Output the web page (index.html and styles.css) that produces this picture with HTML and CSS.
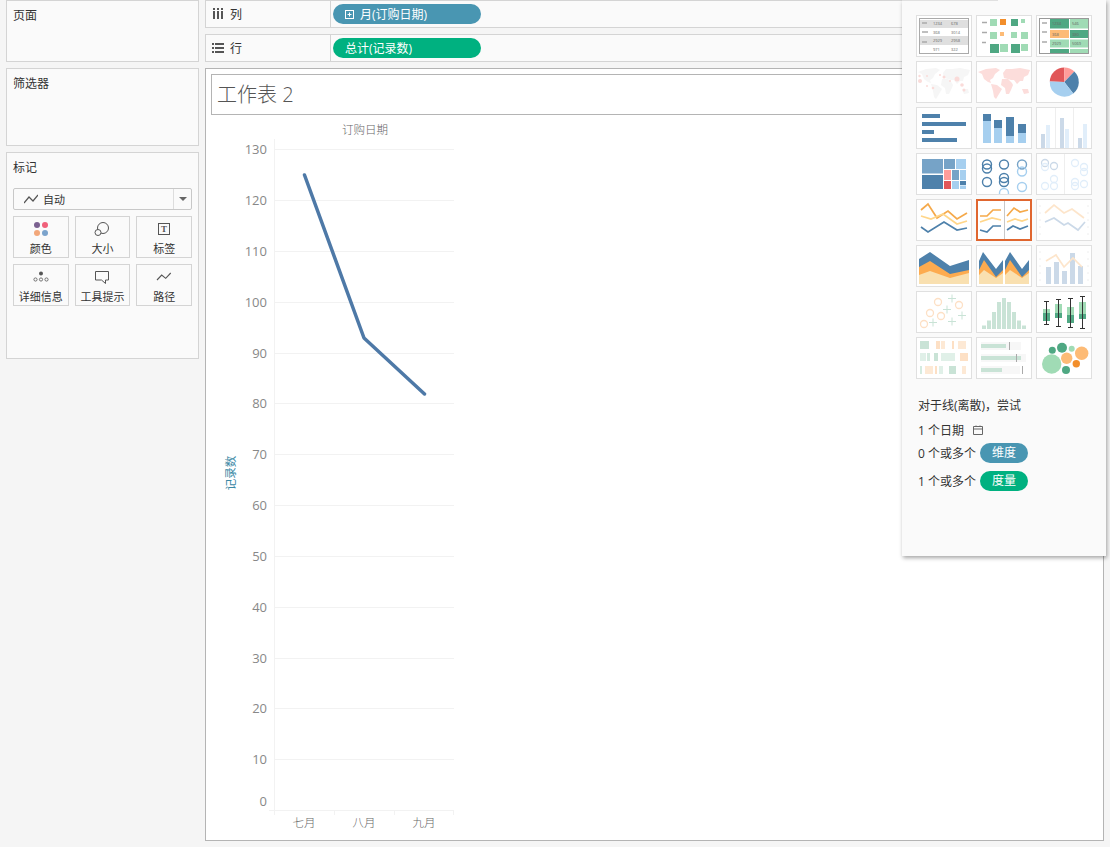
FILE: index.html
```html
<!DOCTYPE html>
<html>
<head>
    <title>工作表 2</title>
    <link rel="stylesheet" href="styles.css">
</head>
<body>
    <div class="app">
        <div class="side">
            <div class="panel panel-pages"><div class="panel-title">页面</div></div>
            <div class="panel panel-filters"><div class="panel-title">筛选器</div></div>
            <div class="panel panel-marks">
                <div class="panel-title">标记</div>
                <div class="mark-select">
                    <svg class="mark-select-icon" width="14" height="10" viewBox="0 0 14 10"><polyline points="0,9 5,3 9,7 14,1" fill="none" stroke="#555" stroke-width="1.2"/></svg>
                    <span class="mark-select-text">自动</span>
                    <span class="mark-select-arrow"></span>
                </div>
                <div class="mark-cards">
                    <div class="mark-card">
                        <svg width="24" height="20" viewBox="0 0 24 20"><circle cx="8" cy="5" r="3" fill="#7b6190"/><circle cx="16" cy="5" r="3" fill="#f0607a"/><circle cx="8" cy="13" r="3" fill="#f2a77a"/><circle cx="16" cy="13" r="3" fill="#7ba3cc"/></svg>
                        <span>颜色</span>
                    </div>
                    <div class="mark-card">
                        <svg width="24" height="20" viewBox="0 0 24 20"><circle cx="13" cy="8" r="5.5" fill="none" stroke="#555"/><circle cx="8" cy="12.5" r="3" fill="#fafafa" stroke="#555"/></svg>
                        <span>大小</span>
                    </div>
                    <div class="mark-card">
                        <svg width="24" height="20" viewBox="0 0 24 20"><rect x="6.5" y="3.5" width="11" height="11" fill="none" stroke="#555"/><text x="12" y="12" text-anchor="middle" class="icon-t">T</text></svg>
                        <span>标签</span>
                    </div>
                    <div class="mark-card">
                        <svg width="24" height="20" viewBox="0 0 24 20"><circle cx="12" cy="5.5" r="2" fill="#555"/><circle cx="6.5" cy="11.5" r="1.6" fill="none" stroke="#555" stroke-width=".8"/><circle cx="12" cy="11.5" r="1.6" fill="none" stroke="#555" stroke-width=".8"/><circle cx="17.5" cy="11.5" r="1.6" fill="none" stroke="#555" stroke-width=".8"/></svg>
                        <span>详细信息</span>
                    </div>
                    <div class="mark-card">
                        <svg width="24" height="20" viewBox="0 0 24 20"><path d="M5.5 3.5H18.5V12H15.5V15.5L11.5 12H5.5Z" fill="none" stroke="#555"/></svg>
                        <span>工具提示</span>
                    </div>
                    <div class="mark-card">
                        <svg width="24" height="20" viewBox="0 0 24 20"><polyline points="5,12 9.7,7 13.7,10.3 18.7,5" fill="none" stroke="#555" stroke-width="1.1"/></svg>
                        <span>路径</span>
                    </div>
                </div>
            </div>
        </div>

        <div class="main">
            <div class="shelf">
                <div class="shelf-label">
                    <svg width="12" height="12" viewBox="0 0 12 12"><path d="M1 0h2v2H1zM5 0h2v2H5zM9 0h2v2H9zM1 3h2v8H1zM5 3h2v8H5zM9 3h2v8H9z" fill="#555"/></svg>
                    <span>列</span>
                </div>
                <div class="pill pill-dim">
                    <svg width="9" height="9" viewBox="0 0 9 9"><rect x=".5" y=".5" width="8" height="8" fill="none" stroke="#fff"/><path d="M2.5 4.5h4M4.5 2.5v4" stroke="#fff"/></svg>
                    <span>月(订购日期)</span>
                </div>
            </div>
            <div class="shelf">
                <div class="shelf-label">
                    <svg width="12" height="12" viewBox="0 0 12 12"><path d="M0 1h2v2H0zM3 1h9v2H3zM0 5h2v2H0zM3 5h9v2H3zM0 9h2v2H0zM3 9h9v2H3z" fill="#555"/></svg>
                    <span>行</span>
                </div>
                <div class="pill pill-measure"><span>总计(记录数)</span></div>
            </div>

            <div class="view">
                <div class="view-title">工作表 2</div>
                <svg class="chart" width="400" height="725" viewBox="206 115 400 725">
                    <text x="365" y="134" text-anchor="middle" class="chart-cat">订购日期</text>
                    <g stroke="#f2f2f2" fill="none">
                        <path d="M274 149.500H454M274 200.500H454M274 251.500H454M274 302.500H454M274 353.500H454M274 403.500H454M274 454.500H454M274 505.500H454M274 556.500H454M274 607.500H454M274 658.500H454M274 708.500H454M274 759.500H454"/>
                        <path d="M274.500 139V815M269 810.500H454M334.500 810V815M394.500 810V815M453.500 810V815"/>
                    </g>
                    <g class="chart-num" text-anchor="end">
                        <text x="267" y="154">130</text><text x="267" y="205">120</text><text x="267" y="256">110</text>
                        <text x="267" y="307">100</text><text x="267" y="358">90</text><text x="267" y="408">80</text>
                        <text x="267" y="459">70</text><text x="267" y="510">60</text><text x="267" y="561">50</text>
                        <text x="267" y="612">40</text><text x="267" y="663">30</text><text x="267" y="713">20</text>
                        <text x="267" y="764">10</text><text x="267" y="806">0</text>
                    </g>
                    <polyline points="304.500,175 364,338 424.500,394" fill="none" stroke="#4e79a7" stroke-width="3.500" stroke-linejoin="round" stroke-linecap="round"/>
                    <g class="chart-cat" text-anchor="middle">
                        <text x="304" y="827">七月</text><text x="364" y="827">八月</text><text x="424" y="827">九月</text>
                    </g>
                    <text class="chart-axis" transform="translate(235 473) rotate(-90)" text-anchor="middle">记录数</text>
                </svg>
            </div>
        </div>
    </div>

    <div class="show-me">
        <div class="thumbs">
            <svg class="thumb" viewBox="1 1 54 40">
                <rect x="3.500" y="3.500" width="49" height="35" fill="#fff" stroke="#aaa"/><rect x="4" y="5" width="48" height="8" fill="#dfdfdf"/><rect x="4" y="21" width="48" height="9" fill="#dfdfdf"/>
                <path d="M6 8h5M6 17h6M6 27h5" stroke="#aaa" stroke-width="1.500"/>
                <g class="thumb-num"><text x="17" y="10">1234</text><text x="35" y="10">678</text><text x="17" y="19">368</text><text x="35" y="19">3014</text><text x="17" y="27">2929</text><text x="35" y="27">2958</text><text x="17" y="36">971</text><text x="35" y="36">322</text></g>
            </svg>
            <svg class="thumb" viewBox="1 1 54 40">
                <path d="M6 7.500h5M6 17.500h5M6 27.500h4" stroke="#aaa" stroke-width="1.500"/>
                <g fill="#a0dbb5"><rect x="14" y="4" width="7" height="7"/><rect x="45" y="4" width="4" height="4"/><rect x="14" y="17" width="7" height="7"/><rect x="35" y="17" width="6" height="6"/><rect x="45" y="17" width="7" height="7"/><rect x="24" y="29" width="8" height="8"/><rect x="45" y="29" width="7" height="7"/></g>
                <rect x="24" y="4" width="6" height="6" fill="#f28e2b"/><rect x="24" y="17" width="4" height="4" fill="#fdbb76"/>
                <g fill="#4fa883"><rect x="35" y="4" width="7" height="7"/><rect x="14" y="29" width="9" height="9"/><rect x="35" y="29" width="9" height="9"/></g>
            </svg>
            <svg class="thumb" viewBox="1 1 54 40">
                <rect x="3.500" y="3.500" width="49" height="35" fill="#fff" stroke="#999"/>
                <path d="M6 8h5M6 17h5M6 27h5" stroke="#aaa" stroke-width="1.500"/>
                <rect x="14" y="4" width="19" height="9.500" fill="#4fa883"/><rect x="34" y="4" width="18" height="9.500" fill="#a0dbb5"/>
                <rect x="14" y="15" width="19" height="8" fill="#fdbb76"/><rect x="34" y="15" width="18" height="8" fill="#4fa883"/>
                <rect x="14" y="24.500" width="19" height="8" fill="#a0dbb5"/><rect x="34" y="24.500" width="18" height="8" fill="#a0dbb5"/>
                <rect x="14" y="34" width="19" height="4" fill="#4fa883"/><rect x="34" y="34" width="18" height="4" fill="#a0dbb5"/>
                <g class="thumb-num"><text x="16" y="10">1234</text><text x="36" y="10">546</text><text x="16" y="21">368</text><text x="36" y="21">380</text><text x="16" y="30">2929</text><text x="36" y="30">5069</text></g>
            </svg>

            <svg class="thumb" viewBox="1 1 54 40">
                <path d="M2 11L10 8L20 7L24 9L19 13L17 17L14 19L15 22L12 21L8 18L6 13ZM15 23L21 24L26 28L23 33L20 38L18 36L17 30ZM27 12L30 8L36 8L44 7L54 9L52 14L48 16L47 20L44 20L41 23L38 19L35 19L32 18L28 17ZM26 18L32 18L36 22L37 24L35 29L33 33L30 33L29 27L25 24ZM46 28L52 28L53 32L48 33Z" fill="#f6f6f6"/>
                <g fill="#fadbd9"><circle cx="4" cy="20" r="2"/><circle cx="3.500" cy="15" r="1.200"/><circle cx="11" cy="15" r="1"/><circle cx="11" cy="25" r="1"/><circle cx="17" cy="27" r="1.300"/><circle cx="24" cy="14" r="1"/><circle cx="28" cy="16" r="1.500"/><circle cx="41" cy="18" r="2.500"/><circle cx="46" cy="24" r="1.800"/><circle cx="48" cy="29" r="1.500"/><circle cx="34" cy="20" r="1"/></g>
            </svg>
            <svg class="thumb" viewBox="1 1 54 40">
                <path d="M2 11L10 8L20 7L24 9L19 13L17 17L14 19L15 22L12 21L8 18L6 13ZM15 23L21 24L26 28L23 33L20 38L18 36L17 30ZM27 12L30 8L36 8L44 7L54 9L52 14L48 16L47 20L44 20L41 23L38 19L35 19L32 18L28 17ZM26 18L32 18L36 22L37 24L35 29L33 33L30 33L29 27L25 24ZM46 28L52 28L53 32L48 33Z" fill="#fcdddb"/>
            </svg>
            <svg class="thumb" viewBox="1 1 54 40">
                <path d="M28.300 21L13.800 20.500A14.500 14.500 0 0 1 28.300 6.500Z" fill="#e15759"/>
                <path d="M28.300 21V6.500A14.500 14.500 0 0 1 38.300 10.500Z" fill="#ff9d9a"/>
                <path d="M28.300 21L38.300 10.500A14.500 14.500 0 0 1 37.300 32.400Z" fill="#4e81ab"/>
                <path d="M28.300 21L37.300 32.400A14.500 14.500 0 0 1 13.800 20.500Z" fill="#a6cfef"/>
            </svg>

            <svg class="thumb" viewBox="1 1 54 40">
                <g fill="#4e81ab"><rect x="6" y="7" width="18" height="4"/><rect x="6" y="15" width="44" height="4"/><rect x="6" y="23" width="12" height="4"/><rect x="6" y="31" width="35" height="4"/></g>
            </svg>
            <svg class="thumb" viewBox="1 1 54 40">
                <g fill="#a6cfef"><rect x="7" y="14" width="8" height="22"/><rect x="18" y="21" width="8" height="15"/><rect x="30" y="29" width="8" height="7"/><rect x="42" y="26" width="8" height="10"/></g>
                <g fill="#4e81ab"><rect x="7" y="7" width="8" height="7"/><rect x="18" y="13" width="8" height="8"/><rect x="30" y="10" width="8" height="19"/><rect x="42" y="17" width="8" height="9"/></g>
            </svg>
            <svg class="thumb" viewBox="1 1 54 40">
                <path d="M19.500 1V41M37.500 1V41" stroke="#eee"/>
                <g fill="#cbd9e8"><rect x="5" y="27" width="4" height="14"/><rect x="24" y="11" width="4" height="30"/><rect x="42" y="31" width="4" height="10"/></g>
                <g fill="#e1eefa"><rect x="10" y="18" width="4" height="23"/><rect x="29" y="22" width="4" height="19"/><rect x="47" y="17" width="4" height="24"/></g>
            </svg>

            <svg class="thumb" viewBox="1 1 54 40">
                <g fill="#76a3c7"><rect x="6" y="6" width="21" height="14.500"/><rect x="28" y="6" width="11" height="10"/><rect x="36" y="17" width="7" height="10"/></g>
                <rect x="6" y="22" width="21" height="14" fill="#4e81ab"/>
                <g fill="#a6cfef"><rect x="40" y="6" width="10" height="10"/><rect x="44" y="17" width="6" height="10"/><rect x="36" y="28" width="7" height="8"/><rect x="44" y="32.500" width="6" height="3.500"/></g>
                <rect x="28" y="17" width="7" height="10" fill="#ff9d9a"/><rect x="28" y="28" width="7" height="8" fill="#e15759"/><rect x="44" y="28" width="6" height="4" fill="#4e81ab"/>
            </svg>
            <svg class="thumb" viewBox="1 1 54 40">
                <g fill="none" stroke-width="1.400">
                    <g stroke="#4e81ab"><circle cx="11" cy="11.500" r="4.500"/><circle cx="11" cy="15.500" r="4.500"/><circle cx="28" cy="11.500" r="4.500"/><circle cx="11" cy="29" r="4.500"/><circle cx="28" cy="25" r="4.500"/><circle cx="28" cy="29" r="4.500"/></g>
                    <g stroke="#76a3c7"><circle cx="46" cy="11.500" r="4.500"/></g>
                    <g stroke="#a6cfef"><circle cx="46" cy="18.500" r="4.500"/><circle cx="46" cy="34" r="4.500"/><circle cx="28" cy="40" r="4.500"/></g>
                </g>
            </svg>
            <svg class="thumb" viewBox="1 1 54 40">
                <path d="M28.500 1V41" stroke="#eee"/>
                <g fill="none" stroke-width="1.300">
                    <g stroke="#cbd9e8"><circle cx="9" cy="10" r="3.500"/><circle cx="18" cy="13" r="3.500"/></g>
                    <g stroke="#e1eefa"><circle cx="9" cy="14" r="3.500"/><circle cx="39" cy="10" r="3.500"/><circle cx="48" cy="14" r="3.500"/><circle cx="48" cy="19" r="3.500"/><circle cx="18" cy="26" r="3.500"/><circle cx="18" cy="33" r="3.500"/><circle cx="9" cy="33" r="3.500"/><circle cx="39" cy="29" r="3.500"/><circle cx="39" cy="33" r="3.500"/><circle cx="48" cy="31" r="3.500"/></g>
                </g>
            </svg>

            <svg class="thumb" viewBox="1 1 54 40">
                <g fill="none" stroke-width="1.700">
                    <polyline points="5,11 12,5 21,19 32,12 41,20 51,14" stroke="#f5a94a"/>
                    <polyline points="5,17 15,20 27,15 41,25 51,22" stroke="#ffd68a"/>
                    <polyline points="5,28 12,33 28,23 41,31 51,29" stroke="#4e81ab"/>
                </g>
            </svg>
            <svg class="thumb thumb-on" viewBox="2 2 52 38">
                <path d="M28.500 2V40" stroke="#c8c8c8"/>
                <g fill="none" stroke-width="1.700">
                    <polyline points="4,17 11,17 17,11 25,11" stroke="#f5a94a"/>
                    <polyline points="4,23 16,19 25,21" stroke="#ffd68a"/>
                    <polyline points="4,31 11,33 17,27 25,27" stroke="#4e81ab"/>
                    <polyline points="31,17 38,9 44,13 52,11" stroke="#f5a94a"/>
                    <polyline points="31,23 39,20 46,22 52,20" stroke="#ffd68a"/>
                    <polyline points="31,31 37,27 44,30 52,27" stroke="#4e81ab"/>
                </g>
            </svg>
            <svg class="thumb" viewBox="1 1 54 40">
                <path d="M3 7h2M3 14h2M3 21h2M3 28h2M3 35h2M51 7h2M51 14h2M51 21h2M51 28h2M51 35h2" stroke="#eee"/>
                <g fill="none" stroke-width="1.700">
                    <polyline points="9,14 18,6 28,14 36,10 48,19" stroke="#fde5cb"/>
                    <polyline points="9,23 18,19 28,26 32,24 42,31 49,23" stroke="#cbd9e8"/>
                </g>
            </svg>

            <svg class="thumb" viewBox="1 1 54 40">
                <polygon points="3,14 14,7 34,21 53,15 53,39 3,39" fill="#4e81ab"/>
                <polygon points="3,22 14,16 34,29 53,25 53,39 3,39" fill="#fdab4f"/>
                <polygon points="3,30 14,26 34,33 53,28 53,39 3,39" fill="#f9e0b0"/>
            </svg>
            <svg class="thumb" viewBox="1 1 54 40">
                <polygon points="3,16 7,7 20,24 27,15 27,39 3,39" fill="#4e81ab"/>
                <polygon points="3,25 8,15 20,32 27,25 27,39 3,39" fill="#fdab4f"/>
                <polygon points="3,30 8,25 20,33 27,28 27,39 3,39" fill="#f9e0b0"/>
                <polygon points="29,16 34,7 46,24 53,15 53,39 29,39" fill="#4e81ab"/>
                <polygon points="29,25 34,15 46,32 53,25 53,39 29,39" fill="#fdab4f"/>
                <polygon points="29,30 34,25 46,33 53,28 53,39 29,39" fill="#f9e0b0"/>
            </svg>
            <svg class="thumb" viewBox="1 1 54 40">
                <path d="M3 7h2M3 14h2M3 21h2M3 28h2M3 35h2M51 7h2M51 14h2M51 21h2M51 28h2M51 35h2" stroke="#eee"/>
                <g fill="#cbd9e8"><rect x="10" y="22" width="5" height="17"/><rect x="18" y="17" width="5" height="22"/><rect x="26" y="26" width="5" height="13"/><rect x="34" y="8" width="5" height="31"/><rect x="42" y="21" width="5" height="18"/></g>
                <polyline points="10,16 20,10 28,22 37,13 46,22" fill="none" stroke="#fde5cb" stroke-width="1.700"/>
            </svg>

            <svg class="thumb" viewBox="1 1 54 40">
                <g fill="none" stroke="#fde0c5" stroke-width="1.300"><circle cx="22" cy="11" r="3.500"/><circle cx="14" cy="22" r="3.500"/><circle cx="25" cy="25" r="3.500"/><circle cx="8" cy="33" r="3.500"/><circle cx="43" cy="14" r="3.500"/></g>
                <path d="M32 7.500h8M36 3.500v8M27 18.500h8M31 14.500v8M42 24.500h8M46 20.500v8M32 30.500h8M36 26.500v8M13 31.500h8M17 27.500v8" stroke="#c9e3d6" fill="none"/>
            </svg>
            <svg class="thumb" viewBox="1 1 54 40">
                <g fill="#c9e3d6"><rect x="6" y="34.500" width="4" height="3.500"/><rect x="11" y="29.500" width="4" height="8.500"/><rect x="16" y="21" width="4" height="17"/><rect x="21" y="11" width="4" height="27"/><rect x="26" y="7" width="4" height="31"/><rect x="31" y="11" width="4" height="27"/><rect x="36" y="21" width="4" height="17"/><rect x="41" y="29.500" width="4" height="8.500"/><rect x="46" y="34.500" width="4" height="3.500"/></g>
            </svg>
            <svg class="thumb" viewBox="1 1 54 40">
                <g fill="#a0dbb5"><rect x="7" y="18" width="7" height="4"/><rect x="19" y="13" width="7" height="9"/><rect x="31" y="16" width="7" height="8"/><rect x="43" y="11" width="7" height="12"/></g>
                <g fill="#4fa883"><rect x="7" y="22" width="7" height="8"/><rect x="19" y="22" width="7" height="5"/><rect x="31" y="24" width="7" height="8"/><rect x="43" y="23" width="7" height="5"/></g>
                <path d="M8 10.500h5M10.500 10.500V33M8 33.500h5M20 8.500h5M22.500 8.500V35M20 35.500h5M32 7.500h5M34.500 7.500V36M32 36.500h5M44 5.500h5M46.500 5.500V37M44 37.500h5" stroke="#333" fill="none"/>
            </svg>

            <svg class="thumb" viewBox="1 1 54 40">
                <g fill="#c9e3d6"><rect x="4" y="4" width="9" height="8"/><rect x="18" y="16" width="4" height="8"/><rect x="33" y="29" width="7" height="8"/></g>
                <g fill="#fde0c5"><rect x="20" y="4" width="4" height="8"/><rect x="36" y="4" width="2" height="8"/><rect x="44" y="16" width="8" height="8"/><rect x="19" y="29" width="2" height="8"/></g>
                <g fill="#fde9d5"><rect x="25" y="4" width="4" height="8"/><rect x="42" y="4" width="8" height="8"/><rect x="9" y="29" width="8" height="8"/><rect x="46" y="29" width="4" height="8"/></g>
                <g fill="#e0f0e8"><rect x="4" y="16" width="6" height="8"/><rect x="25" y="16" width="14" height="8"/><rect x="23" y="29" width="4" height="8"/></g>
                <g fill="#d5ebe0"><rect x="11" y="16" width="3" height="8"/><rect x="4" y="29" width="2" height="8"/></g>
            </svg>
            <svg class="thumb" viewBox="1 1 54 40">
                <g fill="#f7f7f7"><rect x="5" y="5" width="40" height="8"/><rect x="5" y="17" width="45" height="8"/><rect x="5" y="29" width="39" height="8"/></g>
                <g fill="#c9e3d6"><rect x="5" y="7" width="25" height="4"/><rect x="5" y="19" width="40" height="4"/><rect x="5" y="31" width="21" height="4"/></g>
                <path d="M33.500 5v8M40.500 17v8M46.500 29v8" stroke="#aaa"/>
            </svg>
            <svg class="thumb" viewBox="1 1 54 40">
                <circle cx="15.700" cy="27" r="9.700" fill="#a0dbb5"/><circle cx="26" cy="10.700" r="5" fill="#4fa883"/><circle cx="16.300" cy="13.300" r="3.500" fill="#4fa883"/><circle cx="35.700" cy="11.700" r="3" fill="#a0dbb5"/>
                <circle cx="30.700" cy="21.300" r="5.700" fill="#fdbb76"/><circle cx="45.700" cy="16.300" r="6.700" fill="#fdbb76"/><circle cx="40.300" cy="26.700" r="3.700" fill="#f28e2b"/><circle cx="30" cy="33" r="4" fill="#4fa883"/>
            </svg>
        </div>

        <div class="hint">
            <div class="hint-head">对于线(离散)，尝试</div>
            <div class="hint-row hint-date">
                <span>1 个日期</span>
                <svg width="10" height="10" viewBox="0 0 10 10"><path d="M.5 1.500h9v8h-9zM.5 4h9M3 .5v1.500M7 .5v1.500" fill="none" stroke="#666"/></svg>
            </div>
            <div class="hint-row hint-dim"><span>0 个或多个</span><span class="hint-pill pill-dim">维度</span></div>
            <div class="hint-row hint-measure"><span>1 个或多个</span><span class="hint-pill pill-measure">度量</span></div>
        </div>
    </div>
</body>
</html>
```

FILE: styles.css
```css
body { margin: 0; background: #f5f5f5; color: #333; font-family: "Open Sans", "Noto Sans CJK SC", sans-serif; font-size: 12px; }
.app { display: flex; gap: 6px; padding: 0 6px; height: 841px; }

.side { width: 193px; flex: none; display: flex; flex-direction: column; gap: 6px; }
.panel { background: #fafafa; border: 1px solid #d4d4d4; box-sizing: border-box; padding: 6px; }
.panel-title { line-height: 18px; }
.panel-pages { height: 62px; }
.panel-filters { height: 78px; }
.panel-marks { height: 207px; }

.mark-select { display: flex; align-items: center; height: 22px; margin-top: 11px; border: 1px solid #c8c8c8; border-radius: 2px; box-sizing: border-box; width: 179px; position: relative; }
.mark-select-icon { margin-left: 10px; }
.mark-select-text { margin-left: 5px; font-size: 11px; }
.mark-select-arrow { margin-left: auto; width: 18px; height: 100%; border-left: 1px solid #ddd; box-sizing: border-box; display: flex; align-items: center; justify-content: center; }
.mark-select-arrow::after { content: ""; border: 4px solid transparent; border-top: 4px solid #666; border-bottom: 0; }

.mark-cards { display: grid; grid-template-columns: repeat(3, 1fr); gap: 6px; width: 179px; margin-top: 6px; }
.mark-card { height: 42px; border: 1px solid #d4d4d4; box-sizing: border-box; padding-top: 3px; display: flex; flex-direction: column; align-items: center; line-height: 17px; font-size: 11px; }
.mark-card svg { display: block; flex: none; }
.icon-t { font: bold 9px "Liberation Serif", serif; fill: #555; }

.main { flex: 1; display: flex; flex-direction: column; gap: 6px; min-width: 0; }
.shelf { height: 28px; display: flex; background: #fafafa; border: 1px solid #d4d4d4; box-sizing: border-box; }
.shelf-label { width: 125px; flex: none; border-right: 1px solid #d4d4d4; display: flex; align-items: center; gap: 6px; padding-left: 6px; box-sizing: border-box; font-size: 12px; }
.pill { width: 148px; height: 20px; margin: 3px 0 0 2px; border-radius: 10px; color: #fff; display: flex; align-items: center; gap: 6px; padding-left: 12px; box-sizing: border-box; font-size: 12px; }
.pill-dim { background: #4996b2; }
.pill-measure { background: #00b180; }

.view { height: 773px; background: #fff; border: 1px solid #b4b4b4; box-sizing: border-box; padding: 5px; position: relative; }
.view-title { height: 41px; border: 1px solid #b4b4b4; box-sizing: border-box; padding-left: 5px; font-size: 20px; font-weight: 300; line-height: 39px; color: #555; }
.chart { display: block; position: absolute; left: 0; top: 46px; }
.chart-cat { font-size: 11.500px; font-weight: 300; fill: #666; }
.chart-num { font-size: 13px; fill: #888; }
.chart-axis { font-size: 11.500px; font-weight: 400; fill: #3b88a5; }

.show-me { position: absolute; left: 902px; top: 0; width: 204px; height: 556px; background: #fafafa; box-shadow: 1px 2px 4px rgba(0,0,0,0.35); padding: 15px 14px 0; box-sizing: border-box; }
.show-me::before { content: ""; position: absolute; left: 0; top: 0; width: 96px; height: 1px; background: #e0e0e0; }
.thumbs { display: grid; grid-template-columns: repeat(3, 56px); grid-auto-rows: 42px; gap: 4px; }
.thumb { width: 56px; height: 42px; box-sizing: border-box; border: 1px solid #e0e0e0; background: #fff; display: block; }
.thumb-on { border: 2px solid #e0662f; }
.thumb-num { font-size: 4px; fill: #666; }

.hint { margin-top: 17px; margin-left: 2px; }
.hint-head { line-height: 20px; }
.hint-row { display: flex; align-items: center; gap: 4px; height: 20px; }
.hint-date { margin-top: 4px; gap: 9px; }
.hint-dim { margin-top: 3px; }
.hint-measure { margin-top: 8px; }
.hint-pill { width: 48px; height: 20px; border-radius: 10px; color: #fff; text-align: center; line-height: 20px; }
```
